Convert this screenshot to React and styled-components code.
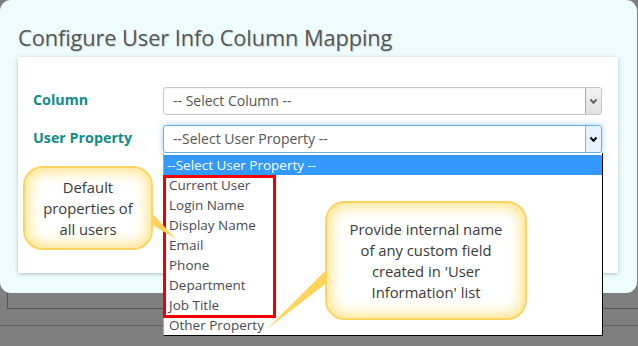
import React from "react";
import styled, { createGlobalStyle } from "styled-components";

const Global = createGlobalStyle`
  html, body { margin: 0; padding: 0; }
  body {
    width: 638px;
    height: 346px;
    overflow: hidden;
    background: #7f7f7f;
    font-family: "Open Sans", "Noto Sans", sans-serif;
  }
`;

const Page = styled.div`
  position: relative;
  width: 638px;
  height: 346px;
  background: #7f7f7f;
  display: flex;
  flex-direction: column;
`;

const Dialog = styled.div`
  width: 637px;
  height: 293px;
  box-sizing: border-box;
  background: #edfcfd;
  border-radius: 11px;
  padding: 22px 19px 0 18px;
  display: flex;
  flex-direction: column;
`;

const Title = styled.h1`
  margin: 0;
  height: 35px;
  font-family: "Open Sans", sans-serif;
  font-weight: 400;
  font-size: 21.8px;
  line-height: 32px;
  color: #555;
  letter-spacing: -0.1px;
  text-shadow: 1px 1px 1px rgba(0, 0, 0, 0.15);
`;

const Panel = styled.div`
  width: 600px;
  height: 216px;
  background: #fff;
  box-shadow: 0 1px 4px rgba(0, 0, 0, 0.25);
  box-sizing: border-box;
  padding: 30px 16px 0 15px;
  display: grid;
  grid-template-columns: 130px 439px;
  grid-auto-rows: 28px;
  row-gap: 10px;
  align-items: center;
`;

const Label = styled.div`
  font-weight: 700;
  font-size: 14.3px;
  color: #0f8c8c;
  margin-top: -4px;
`;

const Select = styled.div`
  height: 28px;
  box-sizing: border-box;
  display: flex;
  align-items: stretch;
  border: 1px solid ${(p) => (p.$focus ? "#66afe9" : "#c8c8c8")};
  border-radius: 3px;
  background: #fff;
  box-shadow: ${(p) =>
    p.$focus ? "0 0 6px rgba(102, 175, 233, 0.6)" : "inset 0 1px 1px rgba(0,0,0,0.05)"};
`;

const SelectText = styled.div`
  flex: 1;
  padding-left: 9px;
  font-size: 14px;
  line-height: 26px;
  color: #555;
`;

const Arrow = styled.div`
  width: 15px;
  border-left: 1px solid ${(p) => (p.$focus ? "#7eb4ea" : "#acacac")};
  background: ${(p) =>
    p.$focus ? "#e5f1fb" : "linear-gradient(#f2f2f2, #e0e0e0)"};
  border-radius: 0 2px 2px 0;
  display: flex;
  align-items: center;
  justify-content: center;
`;

const DropList = styled.div`
  position: absolute;
  left: 163px;
  top: 153px;
  width: 440px;
  height: 183px;
  box-sizing: border-box;
  background: #fff;
  border-left: 1px solid #a8a8a8;
  border-right: 1px solid #000;
  border-bottom: 1px solid #000;
  padding-top: 2px;
`;

const Item = styled.div`
  height: 20px;
  line-height: 20px;
  padding-left: ${(p) => (p.$active ? "3px" : "5px")};
  font-size: 13.5px;
  color: ${(p) => (p.$active ? "#fff" : "#4a4a55")};
  background: ${(p) => (p.$active ? "#3399ff" : "transparent")};
  white-space: nowrap;
`;

const RedBox = styled.div`
  position: absolute;
  left: 163px;
  top: 175px;
  width: 113px;
  height: 143px;
  box-sizing: border-box;
  border: 3px solid #ee0000;
`;

const Callout = styled.div`
  position: absolute;
  left: ${(p) => p.$x}px;
  top: ${(p) => p.$y}px;
  width: ${(p) => p.$w}px;
  height: ${(p) => p.$h}px;
  box-sizing: border-box;
  border: 2px solid #ffd35c;
  border-radius: 20px;
  background: #fff;
  box-shadow: inset 0 0 14px 4px #ffe48a;
  display: flex;
  align-items: center;
  justify-content: center;
  text-align: center;
  font-size: 14.8px;
  line-height: 21px;
  color: #3a3a3a;
`;

const Tail = styled.svg`
  position: absolute;
  left: 0;
  top: 0;
  pointer-events: none;
`;

const Back = styled.div`
  margin-left: 7px;
  height: 15px;
  border-left: 1px solid #555;
  border-bottom: 1px solid #555;
`;

const BackLine = styled.div`
  height: 16px;
  border-bottom: 1px solid #5e5e5e;
`;

const Chevron = ({ color }) => (
  <svg width="9" height="7" viewBox="0 0 9 7">
    <path d="M1.5 1.5 L4.5 4.8 L7.5 1.5" fill="none" stroke={color} strokeWidth="2" />
  </svg>
);

const items = [
  "Current User",
  "Login Name",
  "Display Name",
  "Email",
  "Phone",
  "Department",
  "Job Title",
  "Other Property",
];

export default function App() {
  return (
    <Page>
      <Global />
      <Dialog>
        <Title>Configure User Info Column Mapping</Title>
        <Panel>
          <Label>Column</Label>
          <Select>
            <SelectText>-- Select Column --</SelectText>
            <Arrow>
              <Chevron color="#606060" />
            </Arrow>
          </Select>
          <Label>User Property</Label>
          <Select $focus>
            <SelectText>--Select User Property --</SelectText>
            <Arrow $focus>
              <Chevron color="#000" />
            </Arrow>
          </Select>
        </Panel>
      </Dialog>
      <Back />
      <BackLine />

      <DropList>
        <Item $active>--Select User Property --</Item>
        {items.map((t) => (
          <Item key={t}>{t}</Item>
        ))}
      </DropList>
      <RedBox />

      <Tail width="638" height="346">
        <polygon points="149,210 149,223 176,239" fill="#ffd35c" />
        <polygon points="328,268 328,282 267,329" fill="#ffd35c" />
      </Tail>
      <Callout $x={23} $y={166} $w={130} $h={84}>
        Default
        <br />
        properties of
        <br />
        all users
      </Callout>
      <Callout $x={325} $y={201} $w={202} $h={119}>
        Provide internal name
        <br />
        of any custom field
        <br />
        created in 'User
        <br />
        Information' list
      </Callout>
    </Page>
  );
}
